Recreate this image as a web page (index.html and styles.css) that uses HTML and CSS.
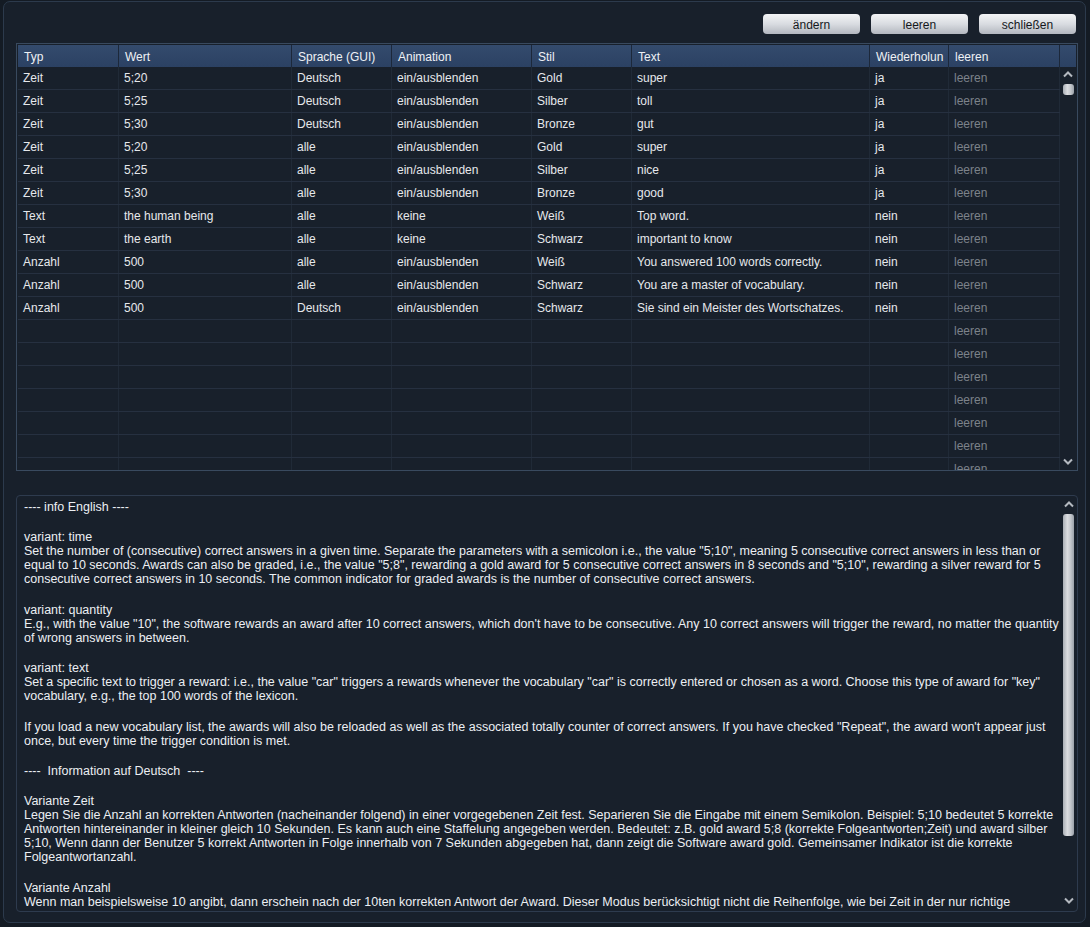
FILE: index.html
```html
<!DOCTYPE html>
<html lang="de">
  <head>
    <meta charset="UTF-8" />
    <title>Awards</title>
    <link rel="stylesheet" href="styles.css">
  </head>
  <body>
    <div class="window">
      <div class="toolbar">
        <button class="btn">ändern</button>
        <button class="btn">leeren</button>
        <button class="btn">schließen</button>
      </div>

      <div class="grid">
        <div class="grid-head">
          <div class="cols">
            <div class="hcell">Typ</div>
            <div class="hcell">Wert</div>
            <div class="hcell">Sprache (GUI)</div>
            <div class="hcell">Animation</div>
            <div class="hcell">Stil</div>
            <div class="hcell">Text</div>
            <div class="hcell">Wiederholun</div>
            <div class="hcell">leeren</div>
          </div>
          <div class="hfill"></div>
        </div>
        <div class="grid-body">
          <div class="rows">
            <div class="cols row"><div class="cell">Zeit</div><div class="cell">5;20</div><div class="cell">Deutsch</div><div class="cell">ein/ausblenden</div><div class="cell">Gold</div><div class="cell">super</div><div class="cell">ja</div><div class="cell dim">leeren</div></div>
            <div class="cols row"><div class="cell">Zeit</div><div class="cell">5;25</div><div class="cell">Deutsch</div><div class="cell">ein/ausblenden</div><div class="cell">Silber</div><div class="cell">toll</div><div class="cell">ja</div><div class="cell dim">leeren</div></div>
            <div class="cols row"><div class="cell">Zeit</div><div class="cell">5;30</div><div class="cell">Deutsch</div><div class="cell">ein/ausblenden</div><div class="cell">Bronze</div><div class="cell">gut</div><div class="cell">ja</div><div class="cell dim">leeren</div></div>
            <div class="cols row"><div class="cell">Zeit</div><div class="cell">5;20</div><div class="cell">alle</div><div class="cell">ein/ausblenden</div><div class="cell">Gold</div><div class="cell">super</div><div class="cell">ja</div><div class="cell dim">leeren</div></div>
            <div class="cols row"><div class="cell">Zeit</div><div class="cell">5;25</div><div class="cell">alle</div><div class="cell">ein/ausblenden</div><div class="cell">Silber</div><div class="cell">nice</div><div class="cell">ja</div><div class="cell dim">leeren</div></div>
            <div class="cols row"><div class="cell">Zeit</div><div class="cell">5;30</div><div class="cell">alle</div><div class="cell">ein/ausblenden</div><div class="cell">Bronze</div><div class="cell">good</div><div class="cell">ja</div><div class="cell dim">leeren</div></div>
            <div class="cols row"><div class="cell">Text</div><div class="cell">the human being</div><div class="cell">alle</div><div class="cell">keine</div><div class="cell">Weiß</div><div class="cell">Top word.</div><div class="cell">nein</div><div class="cell dim">leeren</div></div>
            <div class="cols row"><div class="cell">Text</div><div class="cell">the earth</div><div class="cell">alle</div><div class="cell">keine</div><div class="cell">Schwarz</div><div class="cell">important to know</div><div class="cell">nein</div><div class="cell dim">leeren</div></div>
            <div class="cols row"><div class="cell">Anzahl</div><div class="cell">500</div><div class="cell">alle</div><div class="cell">ein/ausblenden</div><div class="cell">Weiß</div><div class="cell">You answered 100 words correctly.</div><div class="cell">nein</div><div class="cell dim">leeren</div></div>
            <div class="cols row"><div class="cell">Anzahl</div><div class="cell">500</div><div class="cell">alle</div><div class="cell">ein/ausblenden</div><div class="cell">Schwarz</div><div class="cell">You are a master of vocabulary.</div><div class="cell">nein</div><div class="cell dim">leeren</div></div>
            <div class="cols row"><div class="cell">Anzahl</div><div class="cell">500</div><div class="cell">Deutsch</div><div class="cell">ein/ausblenden</div><div class="cell">Schwarz</div><div class="cell">Sie sind ein Meister des Wortschatzes.</div><div class="cell">nein</div><div class="cell dim">leeren</div></div>
            <div class="cols row"><div class="cell"></div><div class="cell"></div><div class="cell"></div><div class="cell"></div><div class="cell"></div><div class="cell"></div><div class="cell"></div><div class="cell dim">leeren</div></div>
            <div class="cols row"><div class="cell"></div><div class="cell"></div><div class="cell"></div><div class="cell"></div><div class="cell"></div><div class="cell"></div><div class="cell"></div><div class="cell dim">leeren</div></div>
            <div class="cols row"><div class="cell"></div><div class="cell"></div><div class="cell"></div><div class="cell"></div><div class="cell"></div><div class="cell"></div><div class="cell"></div><div class="cell dim">leeren</div></div>
            <div class="cols row"><div class="cell"></div><div class="cell"></div><div class="cell"></div><div class="cell"></div><div class="cell"></div><div class="cell"></div><div class="cell"></div><div class="cell dim">leeren</div></div>
            <div class="cols row"><div class="cell"></div><div class="cell"></div><div class="cell"></div><div class="cell"></div><div class="cell"></div><div class="cell"></div><div class="cell"></div><div class="cell dim">leeren</div></div>
            <div class="cols row"><div class="cell"></div><div class="cell"></div><div class="cell"></div><div class="cell"></div><div class="cell"></div><div class="cell"></div><div class="cell"></div><div class="cell dim">leeren</div></div>
            <div class="cols row"><div class="cell"></div><div class="cell"></div><div class="cell"></div><div class="cell"></div><div class="cell"></div><div class="cell"></div><div class="cell"></div><div class="cell dim">leeren</div></div>
          </div>
          <div class="vscroll">
            <svg class="arrow" width="12" height="8" viewBox="0 0 12 8"><polyline points="2,6.5 6,2.5 10,6.5" fill="none" stroke="#b4b9c0" stroke-width="2"/></svg>
            <div class="thumb small"></div>
            <div class="spacer"></div>
            <svg class="arrow" width="12" height="8" viewBox="0 0 12 8"><polyline points="2,1.5 6,5.5 10,1.5" fill="none" stroke="#b4b9c0" stroke-width="2"/></svg>
          </div>
        </div>
      </div>

      <div class="info">
        <div class="info-text">
          <p>---- info English ----</p>
          <p>variant: time<br>
          Set the number of (consecutive) correct answers in a given time. Separate the parameters with a semicolon i.e., the value "5;10", meaning 5 consecutive correct answers in less than or<br>
          equal to 10 seconds. Awards can also be graded, i.e., the value "5;8", rewarding a gold award for 5 consecutive correct answers in 8 seconds and "5;10", rewarding a silver reward for 5<br>
          consecutive correct answers in 10 seconds. The common indicator for graded awards is the number of consecutive correct answers.</p>
          <p>variant: quantity<br>
          E.g., with the value "10", the software rewards an award after 10 correct answers, which don't have to be consecutive. Any 10 correct answers will trigger the reward, no matter the quantity<br>
          of wrong answers in between.</p>
          <p>variant: text<br>
          Set a specific text to trigger a reward: i.e., the value "car" triggers a rewards whenever the vocabulary "car" is correctly entered or chosen as a word. Choose this type of award for "key"<br>
          vocabulary, e.g., the top 100 words of the lexicon.</p>
          <p>If you load a new vocabulary list, the awards will also be reloaded as well as the associated totally counter of correct answers. If you have checked "Repeat", the award won't appear just<br>
          once, but every time the trigger condition is met.</p>
          <p>----&nbsp; Information auf Deutsch &nbsp;----</p>
          <p>Variante Zeit<br>
          Legen Sie die Anzahl an korrekten Antworten (nacheinander folgend) in einer vorgegebenen Zeit fest. Separieren Sie die Eingabe mit einem Semikolon. Beispiel: 5;10 bedeutet 5 korrekte<br>
          Antworten hintereinander in kleiner gleich 10 Sekunden. Es kann auch eine Staffelung angegeben werden. Bedeutet: z.B. gold award 5;8 (korrekte Folgeantworten;Zeit) und award silber<br>
          5;10, Wenn dann der Benutzer 5 korrekt Antworten in Folge innerhalb von 7 Sekunden abgegeben hat, dann zeigt die Software award gold. Gemeinsamer Indikator ist die korrekte<br>
          Folgeantwortanzahl.</p>
          <p>Variante Anzahl<br>
          Wenn man beispielsweise 10 angibt, dann erschein nach der 10ten korrekten Antwort der Award. Dieser Modus berücksichtigt nicht die Reihenfolge, wie bei Zeit in der nur richtige</p>
        </div>
        <div class="vscroll">
          <svg class="arrow" width="12" height="8" viewBox="0 0 12 8"><polyline points="2,6.5 6,2.5 10,6.5" fill="none" stroke="#b4b9c0" stroke-width="2"/></svg>
          <div class="thumb long"></div>
          <div class="spacer"></div>
          <svg class="arrow" width="12" height="8" viewBox="0 0 12 8"><polyline points="2,1.5 6,5.5 10,1.5" fill="none" stroke="#b4b9c0" stroke-width="2"/></svg>
        </div>
      </div>
    </div>
  </body>
</html>
```

FILE: styles.css
```css
* {
  box-sizing: border-box;
}

body {
  margin: 0;
  background-color: #141b24;
  font-family: "Liberation Sans", Arial, sans-serif;
  font-size: 12px;
  color: #e9ecf0;
}

.window {
  margin: 1px 4px 4px 3px;
  height: 922px;
  border: 1px solid #2c3a4c;
  border-radius: 7px;
  background-color: #18202b;
  padding: 12px 7px 10px 12px;
  display: flex;
  flex-direction: column;
}

.toolbar {
  display: flex;
  justify-content: flex-end;
  gap: 11px;
  height: 20px;
  padding-right: 2px;
}

.btn {
  width: 97px;
  height: 20px;
  border: none;
  border-radius: 4px;
  background: linear-gradient(#f3f4f6, #d9dce1 50%, #b3b7bf);
  color: #15181c;
  font-family: "Liberation Sans", Arial, sans-serif;
  font-size: 12px;
  padding: 1px 0 0 0;
}

.grid {
  margin-top: 9px;
  height: 428px;
  border: 1px solid #394a5f;
  padding: 1px 1px 0 1px;
  display: flex;
  flex-direction: column;
}

.grid-head {
  display: flex;
  height: 22px;
  background: linear-gradient(#344b6d, #2b4163);
}

.cols {
  display: grid;
  grid-template-columns: 101px 173px 100px 140px 100px 238px 79px 111px;
  width: 1042px;
}

.hcell {
  line-height: 21px;
  padding: 2px 0 0 6px;
  border-right: 1px solid #1c283a;
  color: #eef1f5;
  white-space: nowrap;
  overflow: hidden;
}

.hfill {
  flex: 1;
}

.grid-body {
  display: flex;
  height: 403px;
}

.rows {
  width: 1042px;
  overflow: hidden;
}

.row {
  height: 23px;
  border-bottom: 1px solid #263040;
}

.cell {
  line-height: 22px;
  padding-left: 5px;
  border-right: 1px solid #202a37;
  white-space: nowrap;
  overflow: hidden;
  color: #e6e8ec;
}

.cell.dim {
  color: #7c828a;
}

.vscroll {
  width: 16px;
  display: flex;
  flex-direction: column;
  align-items: center;
  padding: 3px 0 4px 0;
}

.arrow {
  display: block;
  flex: none;
}

.thumb {
  width: 11px;
  margin-top: 6px;
  background: linear-gradient(to right, #a9aeb5, #dadcdf 40%, #c2c6cb 70%, #9aa0a8);
}

.thumb.small {
  height: 11px;
  border-radius: 3px;
}

.thumb.long {
  height: 322px;
  border-radius: 3px;
}

.spacer {
  flex: 1;
}

.info {
  margin-top: 24px;
  height: 417px;
  border: 1px solid #2e3b4e;
  border-radius: 4px;
  display: flex;
  overflow: hidden;
}

.info-text {
  flex: 1;
  padding: 4px 0 0 7px;
  font-size: 12.5px;
  line-height: 14px;
  color: #eceff3;
  white-space: nowrap;
  overflow: hidden;
}

.info-text p {
  margin: 0 0 16.4px 0;
}

.info .vscroll {
  padding: 4px 0 6px 0;
  width: 17px;
}
```
